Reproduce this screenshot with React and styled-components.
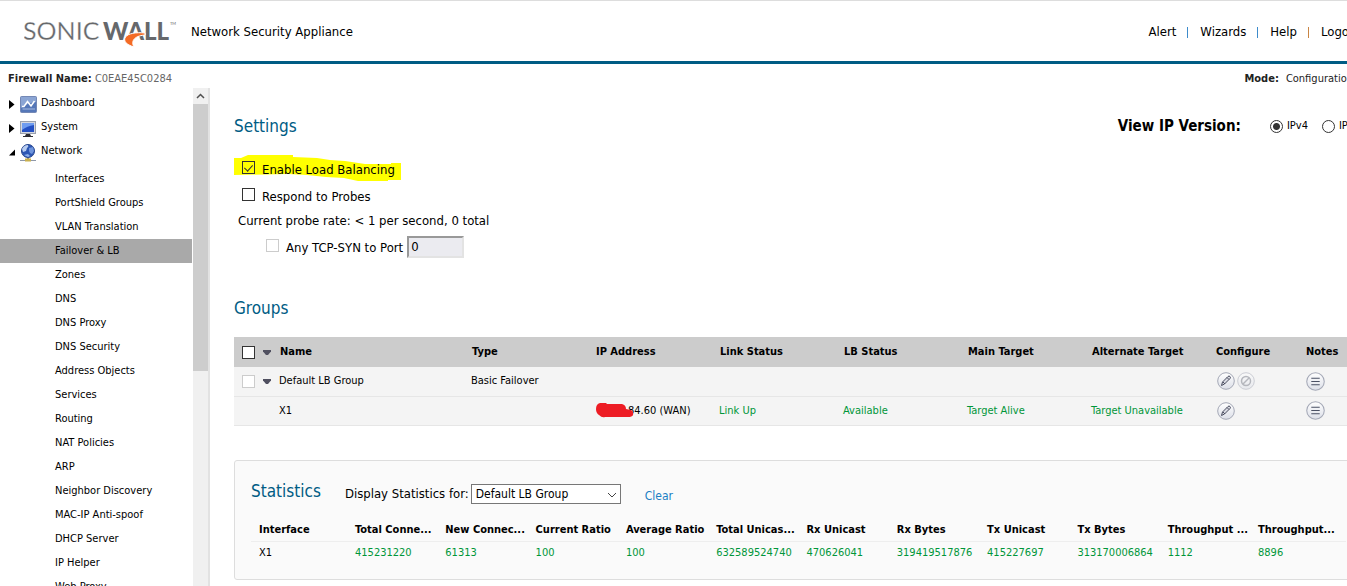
import React, { useState } from "react";
import styled, { createGlobalStyle } from "styled-components";

const menus = [
  { name: "Dashboard", icon: "dashboard" },
  { name: "System", icon: "system" },
  { name: "Network", icon: "network", open: true },
];

const subMenus = [
  "Interfaces",
  "PortShield Groups",
  "VLAN Translation",
  "Failover & LB",
  "Zones",
  "DNS",
  "DNS Proxy",
  "DNS Security",
  "Address Objects",
  "Services",
  "Routing",
  "NAT Policies",
  "ARP",
  "Neighbor Discovery",
  "MAC-IP Anti-spoof",
  "DHCP Server",
  "IP Helper",
  "Web Proxy",
];

const statistics = [
  ["Interface", "X1"],
  ["Total Conne...", "415231220"],
  ["New Connec...", "61313"],
  ["Current Ratio", "100"],
  ["Average Ratio", "100"],
  ["Total Unicas...", "632589524740"],
  ["Rx Unicast", "470626041"],
  ["Rx Bytes", "319419517876"],
  ["Tx Unicast", "415227697"],
  ["Tx Bytes", "313170006864"],
  ["Throughput ...", "1112"],
  ["Throughput...", "8896"],
];

const Logo = () => (
  <svg width="155" height="34" viewBox="0 0 155 34" role="img" aria-label="SonicWall">
    <g fontFamily="Lato, sans-serif" fontSize="25" fill="#66686b">
      <text x="-1" y="24" fontWeight="400" stroke="#fff" strokeWidth="0.3">SONIC</text>
      <text x="79" y="24" fontSize="24" fontWeight="900">WALL</text>
      <text x="146" y="9" fontSize="4">TM</text>
    </g>
    <path
      d="M121 17 C112 16 104 17.500 101.500 21 C99 25 102 28.500 110 31 C107 26 109 20 121 19Z"
      fill="#f46b25"
      stroke="#fff"
      strokeWidth="1"
    />
  </svg>
);

const MenuIcon = ({ type }) => {
  if (type === "dashboard") {
    return (
      <svg width="18" height="18" viewBox="0 0 18 18" aria-hidden="true">
        <rect x="0.500" y="0.500" width="16" height="16" rx="1" fill="#5577b8" stroke="#7488b5" />
        <path d="M1 1h15v5Q9 6 1 12z" fill="#8ba5d4" />
        <path d="M2.500 13h12.500" stroke="#a9bce0" />
        <path d="M2 10.500h2l3.500-5 3.500 4.500 3.500-5" fill="none" stroke="#fff" strokeWidth="1.500" />
      </svg>
    );
  }
  if (type === "system") {
    return (
      <svg width="18" height="18" viewBox="0 0 18 18" aria-hidden="true">
        <rect x="0.500" y="1.500" width="15" height="12" fill="#d5d8df" stroke="#9aa0ad" />
        <rect x="2" y="3" width="12" height="9" fill="#2450c4" />
        <path d="M2 3h12v2Q7 6 2 10z" fill="#6f9cf0" />
        <path d="M6 14h4l1 2h2v1H3v-1h2z" fill="#2d2d32" />
      </svg>
    );
  }
  return (
    <svg width="18" height="18" viewBox="0 0 18 18" aria-hidden="true">
      <circle cx="8" cy="7" r="6.500" fill="#2d57b4" stroke="#26458c" />
      <path d="M2 5Q4 1 8 1q1 2-1 3L6 7 3 8z" fill="#b9cdf0" />
      <path d="M9 4l4-1 1 4-2 3-2-1-1-2z" fill="#6f95dc" />
      <path d="M4 11l4-1 2 2-2 1z" fill="#8fb0ec" />
      <path d="M8 14v2" stroke="#8b8b80" strokeWidth="2" />
      <path d="M0 16.500h16" stroke="#8f98a8" />
      <rect x="5" y="14.500" width="6" height="3" fill="#c9b04e" />
    </svg>
  );
};

const Round = () => (
  <>
    <defs>
      <linearGradient id="round" x1="0" y1="0" x2="0" y2="1">
        <stop offset="0" stopColor="#fff" />
        <stop offset="1" stopColor="#dcdfe8" />
      </linearGradient>
    </defs>
    <circle cx="9" cy="9" r="8.300" fill="url(#round)" stroke="#a4a8b6" />
  </>
);

const EditIcon = () => (
  <svg width="18" height="18" viewBox="0 0 18 18" aria-hidden="true">
    <Round />
    <path d="M4.500 13.500l1-3.500 5.500-5.500q1-1 2 0t0 2L7.500 12z" fill="#d8dae2" stroke="#4a4d60" />
    <path d="M6 10l2 2M10 5.500l2 2" stroke="#4a4d60" />
  </svg>
);

const DeleteIcon = () => (
  <svg width="18" height="18" viewBox="0 0 18 18" opacity="0.5" aria-hidden="true">
    <Round />
    <circle cx="9" cy="9" r="4.500" fill="none" stroke="#777b88" strokeWidth="1.500" />
    <path d="M6 12l6-6" stroke="#777b88" strokeWidth="1.500" />
  </svg>
);

const NotesIcon = () => (
  <svg width="19" height="19" viewBox="0 0 18 18" aria-hidden="true">
    <Round />
    <path d="M5 6h8M5 9h8M5 12h8" stroke="#4a5064" />
  </svg>
);

const Arrow = () => (
  <svg width="8" height="5" viewBox="0 0 8 5" aria-hidden="true">
    <path d="M0 0h8v1.500L5 5H3L0 1.500z" fill="#505060" />
  </svg>
);

const App = () => {
  const [enabled, setEnabled] = useState(true);
  const [probes, setProbes] = useState(false);
  const [version, setVersion] = useState("4");

  return (
    <Page>
      <GlobalStyle />
      <Header>
        <Logo />
        <Product>Network Security Appliance</Product>
        <TopNav>
          <a href="#alert">Alert</a>
          <a href="#wizards">Wizards</a>
          <a href="#help">Help</a>
          <a href="#logout">Logout</a>
        </TopNav>
      </Header>

      <InfoBar>
        <div><b>Firewall Name:</b> <Serial>C0EAE45C0284</Serial></div>
        <Mode><b>Mode:</b><span>Configuration</span></Mode>
      </InfoBar>

      <Body>
        <SideMenu>
          {menus.map((menu) => (
            <MenuItem key={menu.name} href={"#" + menu.icon}>
              <Marker viewBox="0 0 7 9" aria-hidden="true">
                <path d={menu.open ? "M6 1.500v6H0z" : "M0 0l5.500 4.500L0 9z"} />
              </Marker>
              <MenuIcon type={menu.icon} />
              <span>{menu.name}</span>
            </MenuItem>
          ))}
          <SubList>
            {subMenus.map((name) => (
              <li key={name}>
                <SubItem href="#page" $active={name === "Failover & LB"}>{name}</SubItem>
              </li>
            ))}
          </SubList>
        </SideMenu>
        <ScrollBar>
          <ScrollUp viewBox="0 0 15 16" aria-hidden="true">
            <path d="M4 10l3.500-3.500L11 10" />
          </ScrollUp>
          <Thumb />
        </ScrollBar>

        <Content>
          <TitleRow>
            <Title>Settings</Title>
            <VersionBox>
              <strong>View IP Version:</strong>
              <label>
                <Radio type="radio" name="ip" checked={version === "4"} onChange={() => setVersion("4")} />
                IPv4
              </label>
              <label>
                <Radio type="radio" name="ip" checked={version === "6"} onChange={() => setVersion("6")} />
                IPv6
              </label>
            </VersionBox>
          </TitleRow>

          <Options>
            <Option>
              <Marked viewBox="0 0 167 26" aria-hidden="true">
                <path d="M0 3h7l7-3h45v2l24 1 13 2 15 1 20 3h26V8h10v17h-13v1h-30l-14-3-18-1-19-2-19-1-54 1z" />
              </Marked>
              <Check type="checkbox" checked={enabled} onChange={() => setEnabled(!enabled)} />
              <span>Enable Load Balancing</span>
            </Option>
            <Option>
              <Check type="checkbox" $fill="#fff" checked={probes} onChange={() => setProbes(!probes)} />
              <span>Respond to Probes</span>
            </Option>
            <Rate>Current probe rate: &lt; 1 per second, 0 total</Rate>
            <PortRow>
              <Option>
                <Check type="checkbox" $fill="#fff" disabled />
                <span>Any TCP-SYN to Port</span>
              </Option>
              <PortInput type="text" aria-label="Port" defaultValue="0" />
            </PortRow>
          </Options>

          <Title>Groups</Title>
          <GroupTable>
            <colgroup>
              <col width="38" />
              <col width="192" />
              <col span="6" />
              <col width="90" />
              <col width="65" />
            </colgroup>
            <thead>
              <tr>
                <th>
                  <Tick><Check type="checkbox" $fill="#fff" aria-label="Select all" /><Arrow /></Tick>
                </th>
                <th>Name</th>
                <th>Type</th>
                <th>IP Address</th>
                <th>Link Status</th>
                <th>LB Status</th>
                <th>Main Target</th>
                <th>Alternate Target</th>
                <th>Configure</th>
                <th>Notes</th>
              </tr>
            </thead>
            <tbody>
              <tr>
                <td>
                  <Tick><Check type="checkbox" $fill="#fff" disabled aria-label="Select group" /><Arrow /></Tick>
                </td>
                <td>Default LB Group</td>
                <td>Basic Failover</td>
                <td colSpan="5" />
                <td>
                  <Buttons>
                    <IconButton aria-label="Edit"><EditIcon /></IconButton>
                    <IconButton aria-label="Delete" disabled><DeleteIcon /></IconButton>
                  </Buttons>
                </td>
                <td><IconButton aria-label="Notes"><NotesIcon /></IconButton></td>
              </tr>
              <tr>
                <td />
                <td>X1</td>
                <td />
                <td>
                  <Address>
                    84.60 (WAN)
                    <Scribble viewBox="0 0 38 15" aria-hidden="true">
                      <path d="M4 0h6l1 1h15q4 1 4 5l5 1q3 2 2 5-1 2-5 2H9q-3 1-6-2Q0 10 0 6 0 1 4 0z" />
                    </Scribble>
                  </Address>
                </td>
                <Good>Link Up</Good>
                <Good>Available</Good>
                <Good>Target Alive</Good>
                <Good>Target Unavailable</Good>
                <td><Buttons><IconButton aria-label="Edit"><EditIcon /></IconButton></Buttons></td>
                <td><IconButton aria-label="Notes"><NotesIcon /></IconButton></td>
              </tr>
            </tbody>
          </GroupTable>

          <Panel>
            <PanelHead>
              <Title>Statistics</Title>
              <label htmlFor="group">Display Statistics for:</label>
              <SelectBox>
                <select id="group" defaultValue="default">
                  <option value="default">Default LB Group</option>
                </select>
                <svg width="10" height="6" viewBox="0 0 10 6" aria-hidden="true">
                  <path d="M1 1l4 4 4-4" fill="none" stroke="#444" />
                </svg>
              </SelectBox>
              <Clear href="#clear">Clear</Clear>
            </PanelHead>
            <StatTable>
              <colgroup>
                <col width="96" />
                <col span="10" />
                <col width="96" />
              </colgroup>
              <thead>
                <tr>{statistics.map(([name]) => <th key={name}>{name}</th>)}</tr>
              </thead>
              <tbody>
                <tr>
                  {statistics.map(([name, value], idx) =>
                    idx === 0 ? <td key={name}>{value}</td> : <Good key={name}>{value}</Good>
                  )}
                </tr>
              </tbody>
            </StatTable>
          </Panel>
        </Content>
      </Body>
    </Page>
  );
};

const GlobalStyle = createGlobalStyle`
  * {
    box-sizing: border-box;
  }
  body {
    margin: 0;
    background: #fff;
    color: #000;
    font-family: "DejaVu Sans Condensed", Tahoma, "DejaVu Sans", sans-serif;
    font-size: 11px;
    line-height: 16px;
    overflow: hidden;
  }
  a {
    color: inherit;
    text-decoration: none;
  }
`;

/* the console is a little wider than its window */
const Page = styled.div`
  display: flex;
  flex-direction: column;
  height: 100vh;
  margin-right: -16px;
  overflow: hidden;
`;

const Header = styled.header`
  display: flex;
  flex-shrink: 0;
  align-items: center;
  height: 64px;
  padding: 1px 2px 0 24px;
  border-top: 1px solid #ddd;
  border-bottom: 3px solid #005c84;
  font-size: 13px;

  svg {
    margin-top: 3px;
  }
`;

const Product = styled.div`
  margin-left: 12px;
`;

const TopNav = styled.nav`
  display: flex;
  margin-left: auto;

  a + a {
    margin-left: 11px;
    padding-left: 13px;
    background: linear-gradient(#3d8bcb, #3d8bcb) 0 3px / 1px 11px no-repeat;
  }
  a:last-child {
    background-image: linear-gradient(#c98544, #c98544);
  }
`;

const InfoBar = styled.div`
  display: flex;
  flex-shrink: 0;
  align-items: center;
  justify-content: space-between;
  height: 24px;
  padding: 5px 10px 0 8px;
  color: #222;
`;

const Serial = styled.span`
  color: #666;
`;

const Mode = styled.div`
  display: flex;
  gap: 7px;
`;

const Body = styled.div`
  display: flex;
  flex: 1;
  min-height: 0;
`;

const SideMenu = styled.nav`
  flex: 0 0 192px;
  padding-top: 3px;
  overflow: hidden;
`;

const MenuItem = styled.a`
  display: flex;
  align-items: center;
  height: 24px;
  padding-left: 9px;

  svg + svg {
    margin: 3px 3px 0 4px;
  }
`;

const Marker = styled.svg`
  width: 7px;
  height: 9px;
  margin-top: 2px;
`;

const SubList = styled.ul`
  margin: 4px 0 0;
  padding: 0;
  list-style: none;
`;

const SubItem = styled.a`
  display: block;
  height: 24px;
  padding-left: 55px;
  line-height: 24px;
  background: ${(props) => (props.$active ? "#a9a9a9" : "none")};
`;

const ScrollBar = styled.div`
  flex: 0 0 18px;
  border-left: 1px solid #fff;
  border-right: 2px solid #e2e2e2;
  background: #f0f0f0;
`;

const ScrollUp = styled.svg`
  display: block;
  width: 15px;
  height: 16px;
  fill: none;
  stroke: #505050;
  stroke-width: 1.5;
`;

const Thumb = styled.div`
  height: 267px;
  background: #cdcdcd;
`;

const Content = styled.main`
  flex: 1;
  min-width: 0;
  padding: 26px 0 0 24px;
`;

const Title = styled.h2`
  margin: 0;
  color: #005c84;
  font-size: 17px;
  font-weight: 400;
  line-height: 24px;
`;

const TitleRow = styled.div`
  display: flex;
  justify-content: space-between;
`;

const VersionBox = styled.div`
  display: flex;
  align-items: center;
  padding-right: 3px;

  strong {
    margin-right: 29px;
    font-size: 15px;
  }
  label {
    display: flex;
    align-items: center;
    gap: 4px;
  }
  label + label {
    margin-left: 14px;
  }
`;

const Radio = styled.input`
  appearance: none;
  width: 13px;
  height: 13px;
  margin: 0;
  border: 1px solid #333;
  border-radius: 50%;
  background: ${(props) =>
    props.checked ? "radial-gradient(circle, #333 0 3px, #fff 4px)" : "#fff"};
`;

const Options = styled.div`
  display: flex;
  flex-direction: column;
  align-items: flex-start;
  padding: 17px 0 36px 4px;
  font-size: 13px;
`;

const Option = styled.label`
  position: relative;
  display: flex;
  gap: 7px;
  height: 27px;
  padding: 6px 0 0 4px;

  span {
    position: relative;
    margin-top: 1px;
  }
`;

const Marked = styled.svg`
  position: absolute;
  top: 0;
  left: -4px;
  width: 167px;
  height: 26px;
  fill: #ff0;
`;

const Check = styled.input`
  appearance: none;
  position: relative;
  flex-shrink: 0;
  width: 13px;
  height: 13px;
  margin: 0;
  border: 1px solid #333;
  background: ${(props) => props.$fill || "transparent"};

  &:disabled {
    border-color: #ccc;
  }
  &:checked::after {
    content: "";
    position: absolute;
    top: 1px;
    left: 3px;
    width: 4px;
    height: 7px;
    border: solid #333;
    border-width: 0 1px 1px 0;
    transform: rotate(42deg);
  }
`;

const Rate = styled.div`
  height: 24px;
  line-height: 24px;
`;

const PortRow = styled.div`
  display: flex;
  align-items: center;
  gap: 4px;
  padding-left: 24px;
`;

const PortInput = styled.input`
  width: 57px;
  height: 22px;
  padding: 0 2px;
  border: 2px solid;
  border-color: #999 #e3e3e3 #e3e3e3 #999;
  background: #ebebf0;
  font: inherit;
`;

const GroupTable = styled.table`
  width: 100%;
  margin-top: 17px;
  border-collapse: collapse;
  table-layout: fixed;

  th,
  td {
    height: 29px;
    padding: 0 0 0 7px;
    text-align: left;
    white-space: nowrap;
  }
  th {
    height: 30px;
    background: #ccc;
  }
  th,
  td:first-child,
  td:nth-last-child(-n + 2) {
    padding-left: 8px;
  }
  td {
    background: #f4f4f4;
    border-bottom: 1px solid #e6e6e6;
  }
`;

const Tick = styled.div`
  display: flex;
  align-items: center;
  gap: 8px;
`;

const Buttons = styled.div`
  display: flex;
  align-items: center;
  gap: 2px;
  padding-left: 1px;
`;

const IconButton = styled.button`
  display: flex;
  padding: 0;
  border: 0;
  background: none;
`;

const Address = styled.div`
  position: relative;
  padding-left: 33px;
`;

const Scribble = styled.svg`
  position: absolute;
  top: 0;
  left: 1px;
  width: 38px;
  height: 15px;
  fill: #ed1c24;
`;

const Good = styled.td`
  color: #009639;
`;

const Panel = styled.section`
  margin-top: 34px;
  padding: 16px;
  height: 120px;
  border: 1px solid #ddd;
  border-radius: 3px;
  background: #fafafa;
`;

const PanelHead = styled.div`
  display: flex;
  align-items: center;
  height: 34px;
  font-size: 12px;

  h2 {
    margin: -6px 24px 0 0;
  }
  label {
    font-size: 13px;
  }
`;

const SelectBox = styled.div`
  position: relative;
  margin-left: 2px;

  select {
    display: block;
    appearance: none;
    width: 150px;
    height: 20px;
    padding: 0 4px;
    border: 1px solid #777;
    border-radius: 0;
    background: #fff;
    color: #000;
    font: inherit;
  }
  svg {
    position: absolute;
    top: 8px;
    right: 4px;
  }
`;

const Clear = styled.a`
  margin: 4px 0 0 24px;
  color: #1a7fc4;
`;

const StatTable = styled.table`
  width: 100%;
  margin-top: 9px;
  border-collapse: collapse;
  table-layout: fixed;

  th,
  td {
    height: 22px;
    padding: 0 0 0 8px;
    text-align: left;
    white-space: nowrap;
  }
  th {
    border-bottom: 1px solid #eee;
  }
`;

export default App;
